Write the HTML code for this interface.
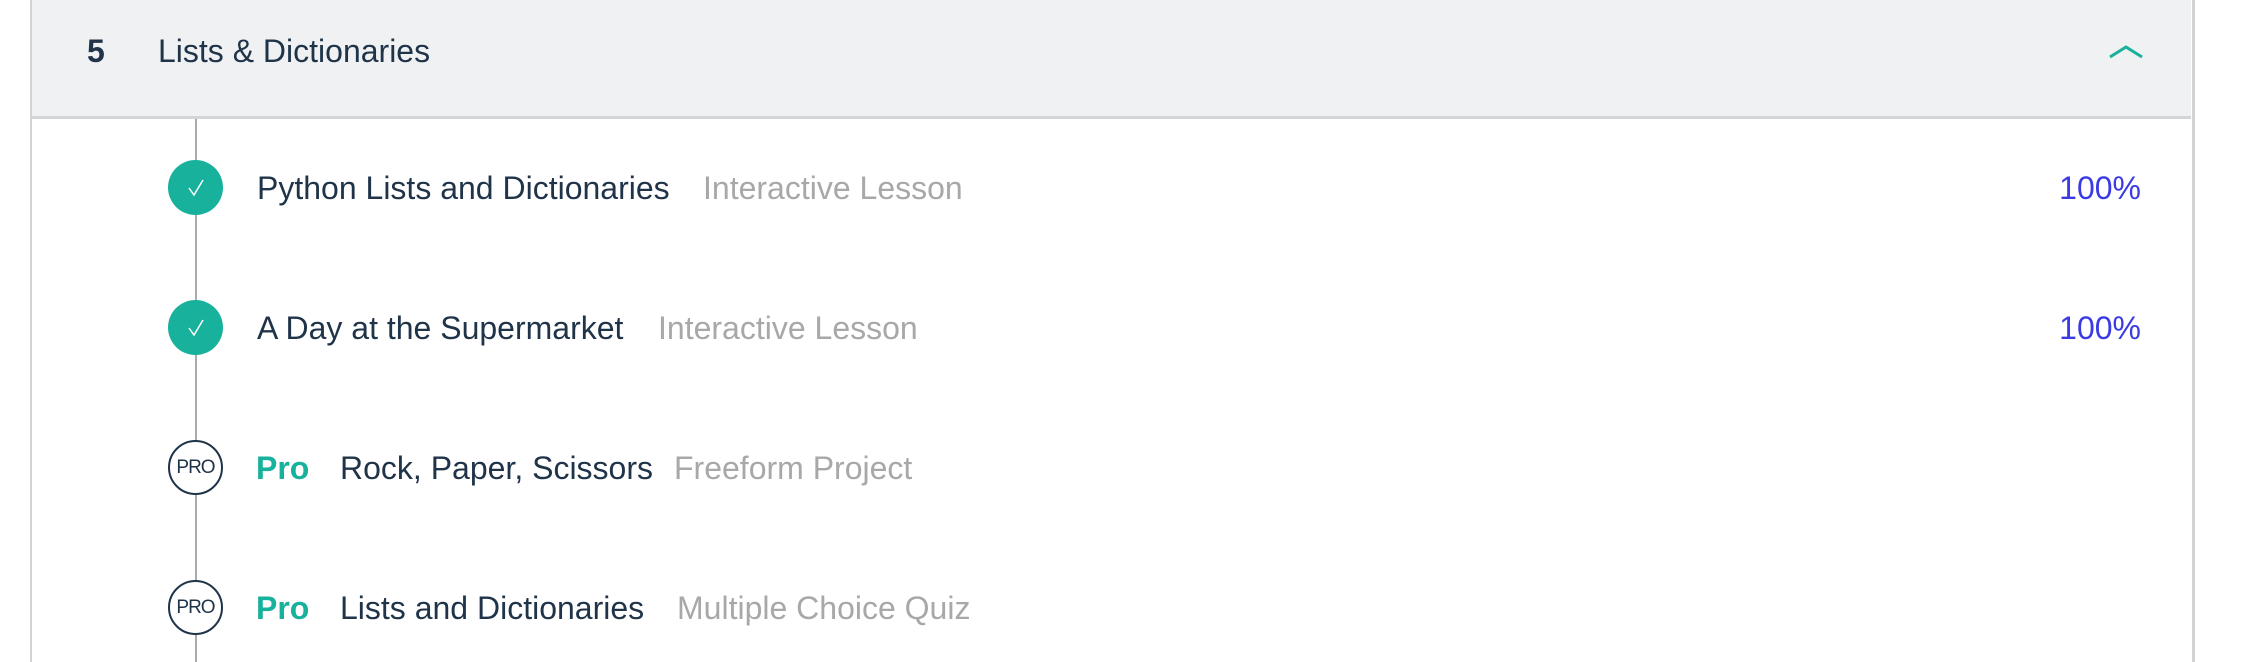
<!DOCTYPE html>
<html><head><meta charset="utf-8"><style>
html,body{margin:0;padding:0;width:2244px;height:662px;background:#fff;overflow:hidden;font-family:"Liberation Sans",sans-serif;position:relative;}
.box{position:absolute;left:30px;top:-2px;width:2160px;height:664px;border-left:2px solid #d2d3d5;border-right:3px solid #d2d3d5;}
.hdr{position:absolute;left:32px;top:0;width:2159px;height:116px;background:#f0f1f3;border-bottom:3px solid #d4d5d7;}
.t{position:absolute;white-space:nowrap;font-size:32px;line-height:36px;color:#1f3349;}
.g{color:#a7a8aa;}
.p{color:#3b3ae3;right:103px;}
.pro{color:#17b19c;font-weight:bold;}
.line{position:absolute;left:195px;top:119px;width:2px;height:543px;background:#a9aaac;}
.c{position:absolute;width:55px;height:55px;border-radius:50%;left:168px;}
.done{background:#17b19c;}
.pc{background:#fff;border:2px solid #1f3349;box-sizing:border-box;font-size:19px;color:#1f3349;text-align:center;line-height:51px;letter-spacing:-1px;}
</style></head><body>
<div class="box"></div>
<div class="hdr"></div>
<div class="t" style="left:87px;top:33px;font-weight:bold;">5</div>
<div class="t" style="left:158px;top:33px;">Lists &amp; Dictionaries</div>
<svg style="position:absolute;left:2108px;top:44px" width="36" height="16"><polyline points="2,13 18,3 34,13" fill="none" stroke="#17b19c" stroke-width="3"/></svg>
<div class="line"></div>

<div class="c done" style="top:160px"><svg width="55" height="55"><polyline points="21,28 26,35 35,20" fill="none" stroke="#fff" stroke-width="1.5"/></svg></div>
<div class="t" style="left:257px;top:170px;">Python Lists and Dictionaries</div>
<div class="t g" style="left:703px;top:170px;">Interactive Lesson</div>
<div class="t p" style="top:170px;">100%</div>

<div class="c done" style="top:300px"><svg width="55" height="55"><polyline points="21,28 26,35 35,20" fill="none" stroke="#fff" stroke-width="1.5"/></svg></div>
<div class="t" style="left:257px;top:310px;">A Day at the Supermarket</div>
<div class="t g" style="left:658px;top:310px;">Interactive Lesson</div>
<div class="t p" style="top:310px;">100%</div>

<div class="c pc" style="top:440px">PRO</div>
<div class="t pro" style="left:256px;top:450px;">Pro</div>
<div class="t" style="left:340px;top:450px;">Rock, Paper, Scissors</div>
<div class="t g" style="left:674px;top:450px;">Freeform Project</div>

<div class="c pc" style="top:580px">PRO</div>
<div class="t pro" style="left:256px;top:590px;">Pro</div>
<div class="t" style="left:340px;top:590px;">Lists and Dictionaries</div>
<div class="t g" style="left:677px;top:590px;">Multiple Choice Quiz</div>
</body></html>
